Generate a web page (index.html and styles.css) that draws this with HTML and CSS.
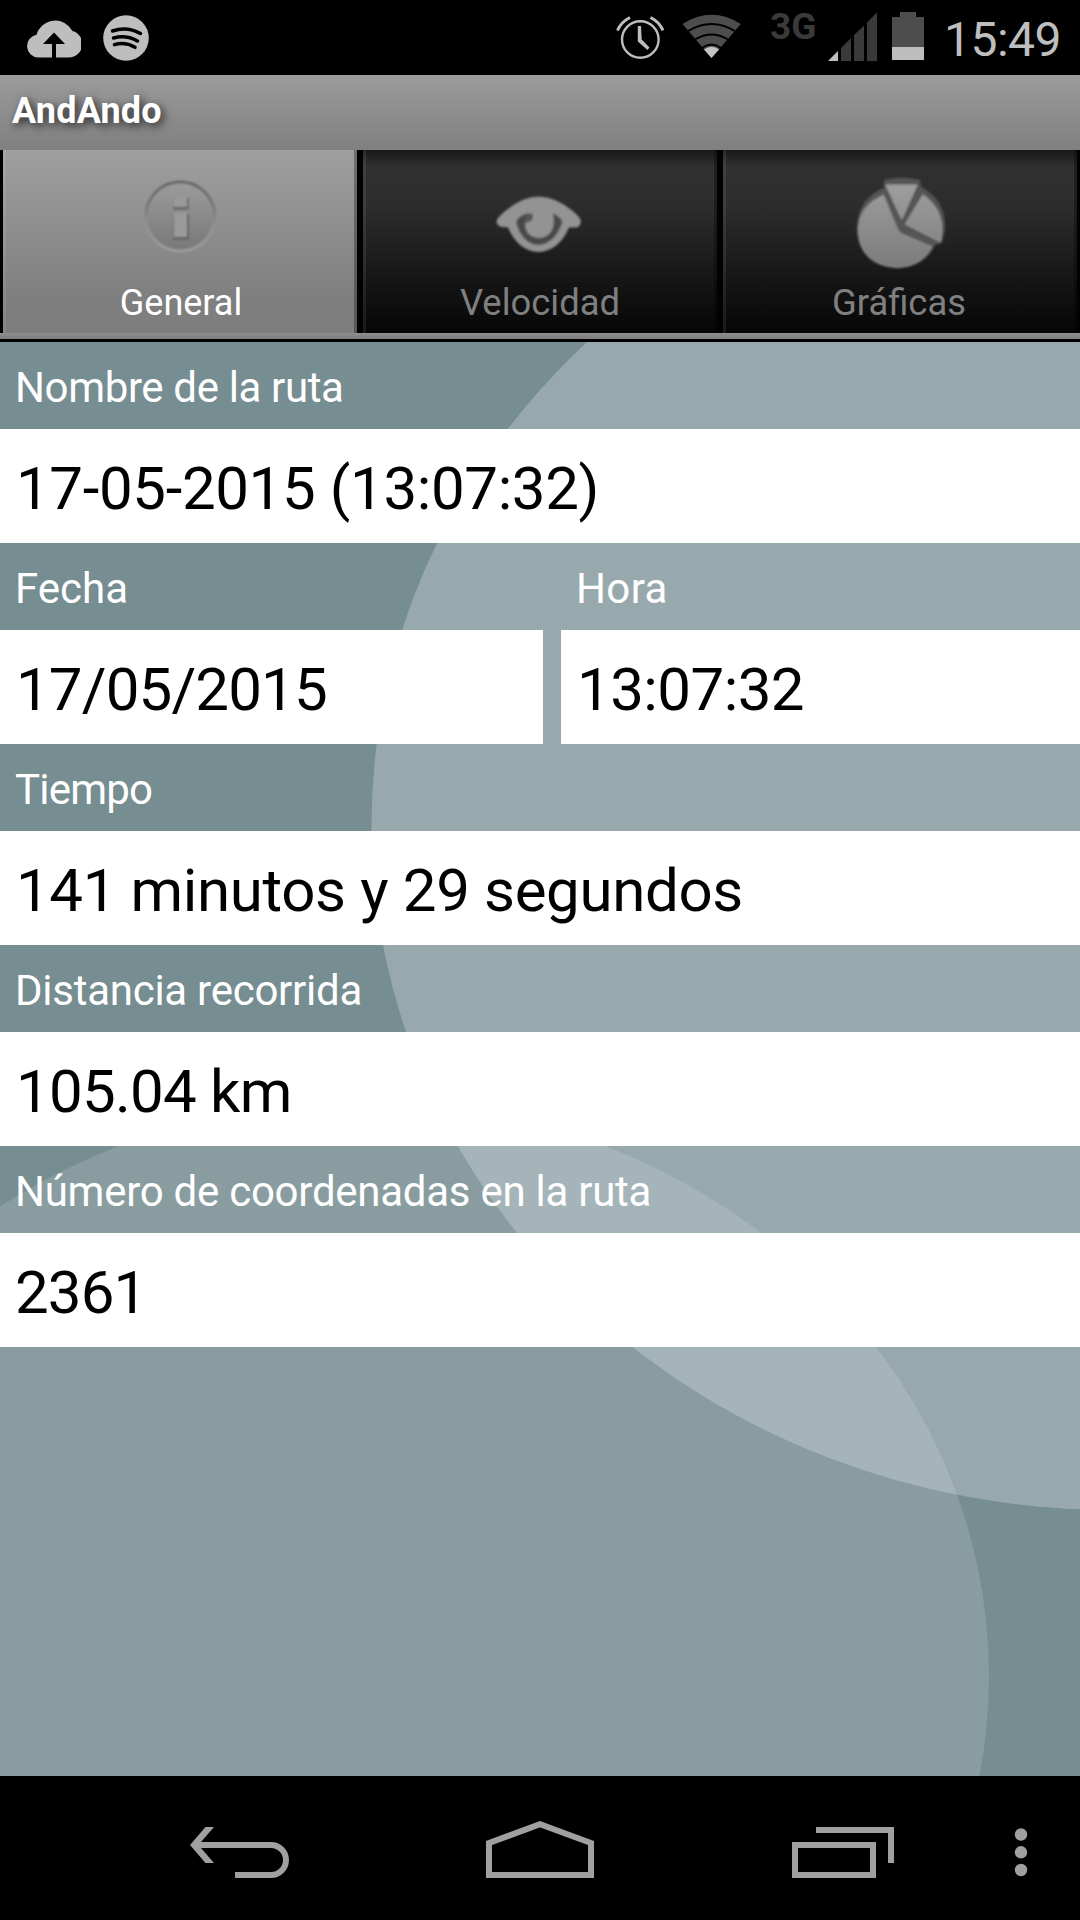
FILE: index.html
```html
<!DOCTYPE html>
<html lang="es">
<head>
<meta charset="utf-8">
<title>AndAndo</title>
<link rel="stylesheet" href="styles.css">
</head>
<body>
<div class="screen">
  <header class="status">
    <div class="notifications">
      <svg width="54" height="75" viewBox="27 0 54 75">
        <path fill="#bebebe" d="M38 57.500A11.500 11.500 0 0 1 36.500 34.700A19.500 19.500 0 0 1 72.500 31A13.500 13.500 0 0 1 69 57.500H56V44H65L54 32.500L43 44H52V57.500Z"/>
      </svg>
      <svg width="46" height="75" viewBox="103 0 46 75">
        <circle cx="126" cy="38" r="22.800" fill="#bebebe"/>
        <path d="M112.500 31Q127 26 140.500 33.500M113.500 38Q126 34.500 137.500 41M114.500 44.700Q125 41.500 135 47.300" fill="none" stroke="#000" stroke-width="3.500" stroke-linecap="round"/>
      </svg>
    </div>
    <div class="indicators">
      <svg class="alarm" width="48" height="75" viewBox="616 0 48 75" fill="none" stroke="#bebebe">
        <circle cx="640.300" cy="39.500" r="18.300" stroke-width="2.400"/>
        <path d="M617.500 30.500Q621 22 630 17.500M663 30.500Q659.500 22 650.500 17.500" stroke-width="3"/>
        <path d="M637.800 26H641L641.700 39.500L649.500 47.500L647.500 50L637.800 41.500Z" fill="#bebebe" stroke="none"/>
      </svg>
      <svg class="wifi" width="60" height="75" viewBox="682 0 60 75">
        <path fill="#4d4d4d" d="M682.500 24Q711.500 5.500 740.800 24L711.500 58Z"/>
        <path fill="none" stroke="#000" stroke-width="2" d="M688 31.200Q711.500 17 735 31.200M695 39.500Q711.500 29.500 728 39.500M702 48Q711.500 41 721 48"/>
        <path fill="#c4c4c4" d="M704 49.500Q711.500 44 719 49.500L711.500 58Z"/>
      </svg>
      <span class="network">3G</span>
      <svg class="signal" width="49" height="75" viewBox="828 0 49 75">
        <path fill="#bebebe" d="M828 61L838 51V61Z"/>
        <path fill="#3a3a3a" d="M841 61V48L851 38V61ZM854 61V35L864 25.500V61ZM867 61V22.500L877 12.500V61Z"/>
      </svg>
      <svg class="battery" width="32" height="75" viewBox="892 0 32 75">
        <path fill="#4d4d4d" d="M892 17H900V12H916V17H924V60H892Z"/>
        <path fill="#bebebe" d="M892 47H924V60H892Z"/>
      </svg>
      <time class="clock">15:49</time>
    </div>
  </header>

  <h1 class="title">AndAndo</h1>

  <nav class="tabs">
    <div class="tab selected">
      <svg width="120" height="120" viewBox="0 0 120 120">
        <defs>
          <linearGradient id="rim" x2="0" y2="1"><stop offset="0" stop-color="#5c5c5c"/><stop offset=".4" stop-color="#777"/><stop offset=".6" stop-color="#929292"/><stop offset="1" stop-color="#a0a0a0"/></linearGradient>
          <linearGradient id="disc" x2="0" y2="1"><stop offset="0" stop-color="#9c9c9c"/><stop offset="1" stop-color="#787878"/></linearGradient>
          <filter id="soft"><feGaussianBlur stdDeviation="1"/></filter>
        </defs>
        <g filter="url(#soft)">
          <circle cx="60.300" cy="61.500" r="34.500" fill="url(#disc)" stroke="url(#rim)" stroke-width="2.400"/>
          <path d="M53 43H68.500V54.500H53ZM53.500 59H69V84.500H53.500Z" fill="#606060"/>
          <path d="M53.300 41.500H67V52H53.300ZM54 57.500H67V82H54Z" fill="#9a9a9a"/>
        </g>
      </svg>
      <span>General</span>
    </div>
    <div class="tab">
      <svg width="120" height="120" viewBox="0 0 120 120">
        <g filter="url(#soft)">
          <path d="M16.500 66Q18 62 24 57Q42 41.500 58.300 41.500Q76 41.500 94 57Q101 63 101 67Q100 72.500 95 72.500L89 72.500Q79 96 58.300 97Q38 96 28 72.500L22 72Q16.500 71 16.500 66Z" fill="#939393"/>
          <path d="M48 58Q38 61 36 67Q42 89 58.300 90Q75 89 82.500 67Q80 61 73 58.500Q77 82 58.300 83Q42 81 46 63Z" fill="#484848"/>
          <path d="M46 59L52 58.500Q54 63 51 66L45 68Z" fill="#555"/>
        </g>
      </svg>
      <span>Velocidad</span>
    </div>
    <div class="tab">
      <svg width="120" height="120" viewBox="0 0 120 120">
        <defs><linearGradient id="slice" gradientUnits="userSpaceOnUse" x1="0" y1="26" x2="0" y2="113"><stop offset="0" stop-color="#a0a0a0"/><stop offset="1" stop-color="#7b7b7b"/></linearGradient></defs>
        <g filter="url(#soft)">
          <path fill="#555" d="M44 25Q61 20 80 25L81 32Q106 45 105 74L102 88L95 90Q85 112 57 113Q18 110 17 73Q18 43 44 33Z"/>
          <path d="M43.500 40L57 73Q58 77 62 79L92 92Q80 112.500 57 112.500Q18.500 110 18 73Q20 50 43.500 40Z" fill="url(#slice)" stroke="#909090" stroke-width="1"/>
          <path d="M46 30H77L61.700 64Z" fill="url(#slice)" stroke="#a0a0a0" stroke-width="1"/>
          <path d="M83 40L65.500 69L100 86.500Q107 57 83 40Z" fill="url(#slice)" stroke="#a0a0a0" stroke-width="1"/>
        </g>
      </svg>
      <span>Gráficas</span>
    </div>
  </nav>

  <main class="details">
    <svg class="backdrop" width="1080" height="1434" viewBox="0 342 1080 1434">
      <ellipse cx="362" cy="1676" rx="627" ry="575" fill="#fff" fill-opacity=".14"/>
      <ellipse cx="1112" cy="825" rx="740.500" ry="685" fill="#e4eaee" fill-opacity=".31"/>
    </svg>
    <section class="field name"><h2>Nombre de la ruta</h2><p>17-05-2015 (13:07:32)</p></section>
    <div class="pair">
      <section class="field date"><h2>Fecha</h2><p>17/05/2015</p></section>
      <section class="field hour"><h2>Hora</h2><p>13:07:32</p></section>
    </div>
    <section class="field duration"><h2>Tiempo</h2><p>141 minutos y 29 segundos</p></section>
    <section class="field distance"><h2>Distancia recorrida</h2><p>105.04 km</p></section>
    <section class="field points"><h2>Número de coordenadas en la ruta</h2><p>2361</p></section>
  </main>

  <footer class="navbar">
    <svg width="100" height="144" viewBox="190 1776 100 144" fill="#a0a0a0">
      <path d="M190 1845L205.500 1827H214L201 1842H271A18 18 0 0 1 271 1878H235V1872H271A12 12 0 0 0 271 1848H201L214 1863H205.500Z"/>
    </svg>
    <svg width="108" height="144" viewBox="486 1776 108 144" fill="none" stroke="#a0a0a0" stroke-width="6">
      <path d="M489 1843L540 1824.300L591 1843V1875H489Z"/>
    </svg>
    <svg width="102" height="144" viewBox="792 1776 102 144" fill="none" stroke="#a0a0a0" stroke-width="6">
      <path d="M795 1845H873V1875H795ZM816 1830H891V1863"/>
    </svg>
    <svg width="14" height="144" viewBox="1014 1776 14 144" fill="#a0a0a0">
      <circle cx="1021" cy="1834.500" r="6.200"/><circle cx="1021" cy="1852.300" r="6.200"/><circle cx="1021" cy="1870" r="6.200"/>
    </svg>
  </footer>
</div>
</body>
</html>
```
FILE: styles.css
```css
* { box-sizing: border-box; }
body { margin: 0; background: #000; font-family: Roboto, "Liberation Sans", sans-serif; }
h1, h2, p { margin: 0; font-weight: 400; }
svg { display: block; flex: none; }

.screen { width: 1080px; height: 1920px; display: flex; flex-direction: column; overflow: hidden; }

.status { height: 75px; display: flex; justify-content: space-between; padding: 0 20px 0 27px; background: #000; }
.notifications { display: flex; gap: 22px; }
.indicators { display: flex; color: #bebebe; }
.wifi { margin-left: 18px; }
.network { width: 48px; margin: 5px 0 0 28px; font-size: 37px; font-weight: 700; line-height: 44px; color: #3a3a3a; }
.signal { margin-left: 10px; }
.battery { margin-left: 15px; }
.clock { width: 116px; margin-left: 20px; font-size: 48px; letter-spacing: -.5px; line-height: 80px; white-space: nowrap; }

.title {
  height: 75px; padding-left: 12px;
  font-size: 36px; font-weight: 700; letter-spacing: .2px; line-height: 73px; color: #fff;
  text-shadow: 3px 3px 9px rgba(0, 0, 0, .75);
  background: linear-gradient(#9b9b9b, #808080);
}

.tabs { height: 192px; display: grid; grid-template-columns: repeat(3, 360px); background: linear-gradient(#8f8f8f, #7e7e7e) 0 183px / 100% 6px no-repeat #000; }
.tab {
  height: 183px; padding-top: 5px; display: flex; flex-direction: column; align-items: center;
  border: solid #020202; border-width: 0 3px;
  box-shadow: inset 3px 0 rgba(255, 255, 255, .08), inset -3px 0 rgba(0, 0, 0, .3);
  background: linear-gradient(#181818, #303030 16px, #2d2d2d 30%, #161616 70%, #060606);
  color: #808080; font-size: 36.4px; line-height: 42px;
}
.tab span { margin-top: 7px; }
.tab.selected { background: linear-gradient(#9f9f9f, #7f7f7f 80%, #7d7d7d); color: #fff; font-size: 36px; }
.tab.selected span { padding-left: 2px; }
.tab:last-child span { padding-right: 2px; }

.details { position: relative; height: 1434px; background: #768d91; }
.backdrop { position: absolute; top: 0; left: 0; }
.field { position: relative; }
.field h2 { height: 87px; padding-left: 15px; font-size: 42px; line-height: 92px; letter-spacing: -.26px; color: #fff; }
.field p { height: 114px; padding-left: 16px; font-size: 60px; line-height: 119px; letter-spacing: -.36px; color: #000; background: #fff; }
.name h2 { letter-spacing: -.36px; }
.date h2 { letter-spacing: 0; }
.date p { letter-spacing: -.85px; }
.hour h2 { letter-spacing: .4px; }
.hour p { letter-spacing: -.55px; }
.duration h2 { letter-spacing: -.8px; }
.distance p { letter-spacing: -.75px; }
.points p { padding-left: 15px; letter-spacing: -.9px; }
.pair { display: grid; grid-template-columns: 543px 1fr; gap: 18px; }

.navbar { height: 144px; padding: 0 52px 0 190px; display: flex; background: #000; }
.navbar svg + svg { margin-left: 196px; }
.navbar svg:nth-child(3) { margin-left: 198px; }
.navbar svg:last-child { margin-left: 120px; }
```
